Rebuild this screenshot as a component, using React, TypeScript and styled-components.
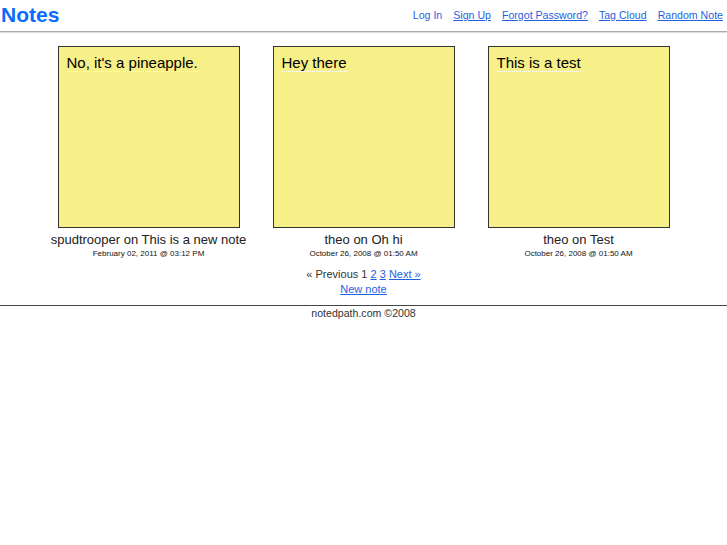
import { FC } from 'react';
import styled, { createGlobalStyle } from 'styled-components';

const GlobalStyle = createGlobalStyle`
  body {
    margin: 0;
    background: #fff;
    font-family: "Liberation Sans", Arial, sans-serif;
    color: #222;
  }
`;

const Header = styled.div`
  display: flex;
  justify-content: space-between;
  align-items: flex-end;
  height: 31px;
  border-bottom: 1px solid #aaa;
  box-shadow: 0 1px 0 #ddd;
`;

const Logo = styled.a`
  font-size: 21px;
  font-weight: bold;
  color: #0a6cff;
  text-decoration: none;
  padding-left: 1px;
  line-height: 30px;
  margin-bottom: 1px;
`;

const Nav = styled.div`
  display: flex;
  gap: 11px;
  padding-right: 4px;
  padding-bottom: 10px;
`;

const NavLink = styled.a<{ $plain?: boolean }>`
  font-size: 10.6px;
  color: #1f62e0;
  text-decoration: ${(p) => (p.$plain ? 'none' : 'underline')};
`;

const Grid = styled.div`
  display: grid;
  grid-template-columns: repeat(3, 215px);
  justify-content: center;
  padding-top: 14px;
`;

const Column = styled.div`
  display: flex;
  flex-direction: column;
  align-items: center;
`;

const Sticky = styled.div`
  box-sizing: border-box;
  width: 182px;
  height: 182px;
  background: #f7ef88;
  border: 1px solid #333;
  padding: 7px 8px;
  font-size: 15px;
  color: #000;
`;

const Title = styled.span`
  border-bottom: 1px dotted #fff;
`;

const Caption = styled.div`
  margin-top: 4px;
  font-size: 13px;
  color: #222;
`;

const Stamp = styled.div`
  font-size: 8px;
  color: #111;
  margin-top: 2px;
`;

const Pager = styled.div`
  text-align: center;
  font-size: 11px;
  color: #333;
  margin-top: 9px;
  line-height: 15px;
  a {
    color: #1f62e0;
  }
`;

const Footer = styled.div`
  margin-top: 8px;
  border-top: 1px solid #444;
  text-align: center;
  font-size: 10.6px;
  color: #333;
  padding-top: 1px;
`;

const notes = [
  { text: "No, it's a pineapple.", by: 'spudtrooper on This is a new note', at: 'February 02, 2011 @ 03:12 PM' },
  { text: 'Hey there', by: 'theo on Oh hi', at: 'October 26, 2008 @ 01:50 AM' },
  { text: 'This is a test', by: 'theo on Test', at: 'October 26, 2008 @ 01:50 AM' },
];

const App: FC = () => (
  <>
    <GlobalStyle />
    <Header>
      <Logo href="#">Notes</Logo>
      <Nav>
        <NavLink $plain href="#">Log In</NavLink>
        <NavLink href="#">Sign Up</NavLink>
        <NavLink href="#">Forgot Password?</NavLink>
        <NavLink href="#">Tag Cloud</NavLink>
        <NavLink href="#">Random Note</NavLink>
      </Nav>
    </Header>
    <Grid>
      {notes.map((n) => (
        <Column key={n.text}>
          <Sticky>
            <Title>{n.text}</Title>
          </Sticky>
          <Caption>{n.by}</Caption>
          <Stamp>{n.at}</Stamp>
        </Column>
      ))}
    </Grid>
    <Pager>
      « Previous 1 <a href="#">2</a> <a href="#">3</a> <a href="#">Next »</a>
      <br />
      <a href="#">New note</a>
    </Pager>
    <Footer>notedpath.com ©2008</Footer>
  </>
);

export default App;
